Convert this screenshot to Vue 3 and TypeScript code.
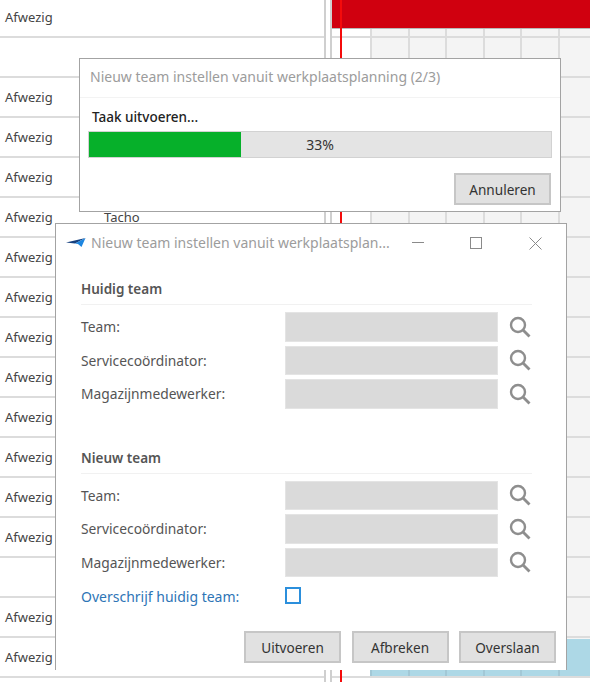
<script setup lang="ts">
interface Row {
  status: string
  extra?: string
}

const rows: Row[] = [
  { status: 'Afwezig' },
  { status: '' },
  { status: 'Afwezig' },
  { status: 'Afwezig' },
  { status: 'Afwezig' },
  { status: 'Afwezig', extra: 'Tacho' },
  { status: 'Afwezig' },
  { status: 'Afwezig' },
  { status: 'Afwezig' },
  { status: 'Afwezig' },
  { status: 'Afwezig' },
  { status: 'Afwezig' },
  { status: 'Afwezig' },
  { status: 'Afwezig' },
  { status: '' },
  { status: 'Afwezig' },
  { status: 'Afwezig' },
]

const cols = 6
const teamFields = ['Team:', 'Servicecoördinator:', 'Magazijnmedewerker:']
const progress = 33
</script>

<template>
  <div class="screen">
    <div class="list">
      <div v-for="(row, i) in rows" :key="i" class="list-row">
        <span class="status">{{ row.status }}</span>
        <span v-if="row.extra" class="extra">{{ row.extra }}</span>
      </div>
    </div>
    <div class="gantt">
      <div
        v-for="(row, i) in rows"
        :key="i"
        class="gantt-row"
        :class="{ booked: i === rows.length - 1 }"
      >
        <div class="lead"></div>
        <div v-for="c in cols" :key="c" class="cell"></div>
      </div>
      <div class="red-bar"></div>
      <div class="now-line"></div>
    </div>

    <section class="dialog progress-dialog">
      <header class="progress-title">Nieuw team instellen vanuit werkplaatsplanning (2/3)</header>
      <div class="progress-body">
        <div class="task">Taak uitvoeren...</div>
        <div class="bar">
          <div class="bar-fill" :style="{ width: progress + '%' }"></div>
          <span class="bar-text">{{ progress }}%</span>
        </div>
        <div class="actions">
          <button class="btn">Annuleren</button>
        </div>
      </div>
    </section>

    <section class="dialog team-dialog">
      <header class="titlebar">
        <svg class="logo" width="20" height="10" viewBox="0 0 20 10">
          <path d="M0 4.5 L19.5 0 L9 5.5 Z" fill="#16407f" />
          <path d="M19.5 0 L15.5 9 L12 6 L9 5.5 Z" fill="#1d86e0" />
        </svg>
        <span class="title-text">Nieuw team instellen vanuit werkplaatsplan...</span>
        <span class="win-btn min"></span>
        <span class="win-btn max"></span>
        <svg class="win-btn close" width="13" height="13" viewBox="0 0 13 13">
          <path d="M0.5 0.5 L12.5 12.5 M12.5 0.5 L0.5 12.5" stroke="#8a8a8a" stroke-width="1" />
        </svg>
      </header>

      <div class="content">
        <div class="group">
          <h3 class="group-title">Huidig team</h3>
          <div v-for="f in teamFields" :key="f" class="field">
            <label>{{ f }}</label>
            <div class="input"></div>
            <svg class="search" width="22" height="22" viewBox="0 0 22 22">
              <circle cx="9" cy="9" r="7" fill="none" stroke="#8e8e8e" stroke-width="2.4" />
              <path d="M14 14 L20.5 20.5" stroke="#8e8e8e" stroke-width="2.8" />
            </svg>
          </div>
        </div>

        <div class="group second">
          <h3 class="group-title">Nieuw team</h3>
          <div v-for="f in teamFields" :key="f" class="field">
            <label>{{ f }}</label>
            <div class="input"></div>
            <svg class="search" width="22" height="22" viewBox="0 0 22 22">
              <circle cx="9" cy="9" r="7" fill="none" stroke="#8e8e8e" stroke-width="2.4" />
              <path d="M14 14 L20.5 20.5" stroke="#8e8e8e" stroke-width="2.8" />
            </svg>
          </div>
          <div class="field check-field">
            <label class="link">Overschrijf huidig team:</label>
            <span class="checkbox"></span>
          </div>
        </div>
      </div>

      <footer class="footer">
        <button class="btn">Uitvoeren</button>
        <button class="btn">Afbreken</button>
        <button class="btn">Overslaan</button>
      </footer>
    </section>
  </div>
</template>

<style scoped>
.screen {
  position: relative;
  display: flex;
  width: 590px;
  height: 682px;
  overflow: hidden;
  background: #fff;
  font-family: "Noto Sans", "Open Sans", "Liberation Sans", sans-serif;
  font-size: 13px;
  color: #444;
}

.list {
  width: 324px;
  flex: none;
}

.list-row {
  display: flex;
  align-items: center;
  height: 40px;
  padding-left: 5px;
  box-sizing: border-box;
  border-bottom: 2px solid #dcdcdc;
}

.list-row:first-child {
  height: 38px;
  padding-bottom: 2px;
}

.status {
  width: 99px;
}

.extra {
  color: #444;
}

.gantt {
  position: relative;
  flex: none;
  width: 258px;
  margin-left: 8px;
}

.gantt::before,
.gantt::after {
  content: "";
  position: absolute;
  top: 0;
  bottom: 0;
  width: 2px;
  background: #cfcfcf;
}

.gantt::before {
  left: -8px;
}

.gantt::after {
  left: -2px;
}

.gantt-row {
  display: flex;
  height: 40px;
  box-sizing: border-box;
  border-bottom: 2px solid #dcdcdc;
}

.gantt-row:first-child {
  height: 38px;
}

.lead {
  width: 38px;
  flex: none;
  background: #fff;
}

.cell {
  width: 37.6px;
  flex: none;
  box-sizing: border-box;
  background: #f4f4f4;
  border-left: 2px solid #dcdcdc;
}

.booked .cell {
  background: #add8e6;
  border-top: 1px solid #f4f4f4;
  border-left-color: #a2c8d6;
}

.red-bar {
  position: absolute;
  top: 0;
  left: 0;
  right: 0;
  height: 29px;
  background: #d0000f;
  border-bottom: 1px solid #b8b8b8;
  box-sizing: border-box;
}

.now-line {
  position: absolute;
  top: 0;
  bottom: 0;
  left: 8px;
  width: 2px;
  background: #f40b0b;
}

.dialog {
  position: absolute;
  box-sizing: border-box;
  background: #fff;
  border: 1px solid #a3a3a3;
}

.progress-dialog {
  left: 79px;
  top: 58px;
  width: 482px;
  height: 154px;
}

.progress-title {
  height: 39px;
  padding-left: 10px;
  box-sizing: border-box;
  border-bottom: 1px solid #f3f3f3;
  font-size: 14px;
  line-height: 36px;
  color: #9c9c9c;
}

.progress-body {
  padding: 10px 8px 0;
}

.task {
  padding-left: 4px;
  height: 23px;
  line-height: 19px;
  font-size: 13.5px;
  font-weight: 500;
  color: #222;
}

.bar {
  position: relative;
  height: 27px;
  box-sizing: border-box;
  border: 1px solid #d2d2d2;
  background: #e4e4e4;
}

.bar-fill {
  height: 100%;
  background: #06b02a;
}

.bar-text {
  position: absolute;
  inset: 0;
  display: flex;
  align-items: center;
  justify-content: center;
  font-size: 14px;
  color: #333;
}

.actions {
  display: flex;
  justify-content: flex-end;
  margin-top: 15px;
  padding-right: 1px;
}

.btn {
  width: 97px;
  height: 32px;
  padding: 0;
  box-sizing: border-box;
  border: 2px solid #c6c6c6;
  background: #e1e1e1;
  font: inherit;
  font-size: 13.6px;
  color: #333;
}

.team-dialog {
  left: 55px;
  top: 223px;
  width: 512px;
  height: 447px;
  border-bottom: none;
  display: flex;
  flex-direction: column;
}

.titlebar {
  display: flex;
  align-items: center;
  height: 37px;
  margin-bottom: 2px;
  padding-left: 10px;
  flex: none;
}

.logo {
  flex: none;
  margin-right: 5px;
}

.title-text {
  font-size: 14px;
  color: #9c9c9c;
}

.win-btn {
  position: absolute;
  box-sizing: border-box;
}

.min {
  left: 356px;
  top: 18px;
  width: 12px;
  height: 1px;
  background: #8a8a8a;
}

.max {
  left: 414px;
  top: 13px;
  width: 12px;
  height: 12px;
  border: 1px solid #8a8a8a;
}

.close {
  left: 473px;
  top: 13px;
}

.content {
  flex: 1;
  padding: 15px 34px 0 25px;
}

.group-title {
  margin: 0 0 7px;
  height: 26px;
  line-height: 22px;
  font-size: 13.5px;
  font-weight: 600;
  color: #555;
  border-bottom: 1px solid #f1f1f1;
}

.second {
  margin-top: 38px;
}

.field {
  display: flex;
  align-items: center;
  height: 29.5px;
  margin-bottom: 4px;
}

.field label {
  width: 204px;
  flex: none;
  font-size: 13.8px;
  color: #555;
}

.input {
  width: 213px;
  height: 100%;
  flex: none;
  background: #dadada;
  border: 1px solid #e4e4e4;
  box-sizing: border-box;
}

.search {
  margin-left: 11px;
  flex: none;
}

.check-field {
  height: 20px;
  margin-top: 9px;
}

.field .link {
  font-size: 14px;
  color: #2e75b6;
}

.checkbox {
  width: 16px;
  height: 17px;
  margin-bottom: 2px;
  box-sizing: border-box;
  border: 2px solid #2b8fdc;
}

.footer {
  display: flex;
  justify-content: flex-end;
  gap: 10.5px;
  padding: 0 10px 7px 0;
}
</style>

<style>
body {
  margin: 0;
}
</style>
